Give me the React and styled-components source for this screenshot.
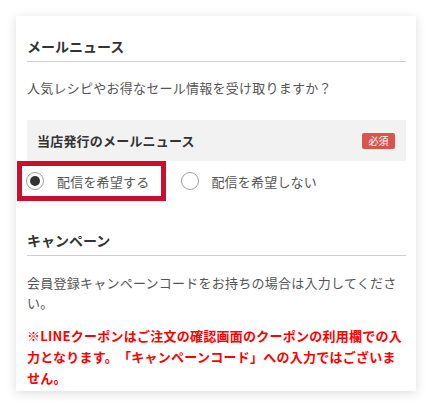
import React from "react";
import styled, { createGlobalStyle } from "styled-components";

const Global = createGlobalStyle`
  html, body { margin: 0; padding: 0; background: #fff; }
  body {
    font-family: "Noto Sans CJK JP", "Noto Sans", sans-serif;
    text-spacing-trim: space-all;
  }
  * { box-sizing: border-box; }
`;

const Page = styled.div`
  padding: 16px 20px 20px 16px;
`;

const Card = styled.div`
  width: 400px;
  background: #fff;
  box-shadow: 0 2px 10px rgba(0, 0, 0, 0.14);
  padding: 20px 10px 3px 11px;
`;

const Heading = styled.h2`
  margin: ${(p) => p.$top || 0}px 0 0;
  font-size: 14px;
  font-weight: 700;
  line-height: 20px;
  color: #333;
  padding-bottom: 5px;
  border-bottom: 1px solid #cfcfcf;
`;

const Text = styled.p`
  margin: ${(p) => p.$top || 0}px 0 0;
  font-size: 13px;
  letter-spacing: 0.25px;
  line-height: ${(p) => p.$lh || 20}px;
  color: ${(p) => (p.$alert ? "#ff0000" : "#555")};
  font-weight: ${(p) => (p.$alert ? 700 : 400)};
`;

const FieldHead = styled.div`
  margin-top: 22px;
  height: 41px;
  background: #f2f2f2;
  display: flex;
  align-items: center;
  justify-content: space-between;
  padding: 0 11px 0 10px;
`;

const FieldTitle = styled.span`
  font-size: 13px;
  font-weight: 700;
  letter-spacing: 0.2px;
  color: #333;
`;

const Badge = styled.span`
  width: 33px;
  height: 16px;
  border-radius: 2px;
  background: #d9534f;
  color: #fff;
  font-size: 10px;
  line-height: 16px;
  text-align: center;
`;

const RadioRow = styled.div`
  height: 40px;
  display: flex;
  align-items: center;
  gap: 20px;
`;

const Option = styled.label`
  display: flex;
  align-items: center;
  gap: ${(p) => (p.$first ? 13 : 12)}px;
  height: 30px;
  padding: 0 ${(p) => (p.$first ? "12px 0 4px" : "0 0 0")};
  margin-left: ${(p) => (p.$first ? "-5px" : "0")};
  outline: ${(p) => (p.$highlight ? "5px solid #c8102e" : "none")};
`;

const Circle = styled.span`
  width: 18px;
  height: 18px;
  border-radius: 50%;
  border: 1px solid #a0a0a0;
  background: #fff;
  display: flex;
  align-items: center;
  justify-content: center;
  &::after {
    content: "";
    width: 10px;
    height: 10px;
    border-radius: 50%;
    background: ${(p) => (p.$checked ? "#333" : "transparent")};
  }
`;

const OptionLabel = styled.span`
  font-size: 13px;
  letter-spacing: 0.2px;
  color: #555;
`;

export default function App() {
  return (
    <>
      <Global />
      <Page>
        <Card>
          <Heading>メールニュース</Heading>
          <Text $top={16}>人気レシピやお得なセール情報を受け取りますか？</Text>
          <FieldHead>
            <FieldTitle>当店発行のメールニュース</FieldTitle>
            <Badge>必須</Badge>
          </FieldHead>
          <RadioRow>
            <Option $first $highlight>
              <Circle $checked />
              <OptionLabel>配信を希望する</OptionLabel>
            </Option>
            <Option>
              <Circle />
              <OptionLabel>配信を希望しない</OptionLabel>
            </Option>
          </RadioRow>
          <Heading $top={29}>キャンペーン</Heading>
          <Text $top={17}>
            会員登録キャンペーンコードをお持ちの場合は入力してください。
          </Text>
          <Text $top={12} $lh={21} $alert>
            ※LINEクーポンはご注文の確認画面のクーポンの利用欄での入力となります。「キャンペーンコード」への入力ではございません。
          </Text>
        </Card>
      </Page>
    </>
  );
}
